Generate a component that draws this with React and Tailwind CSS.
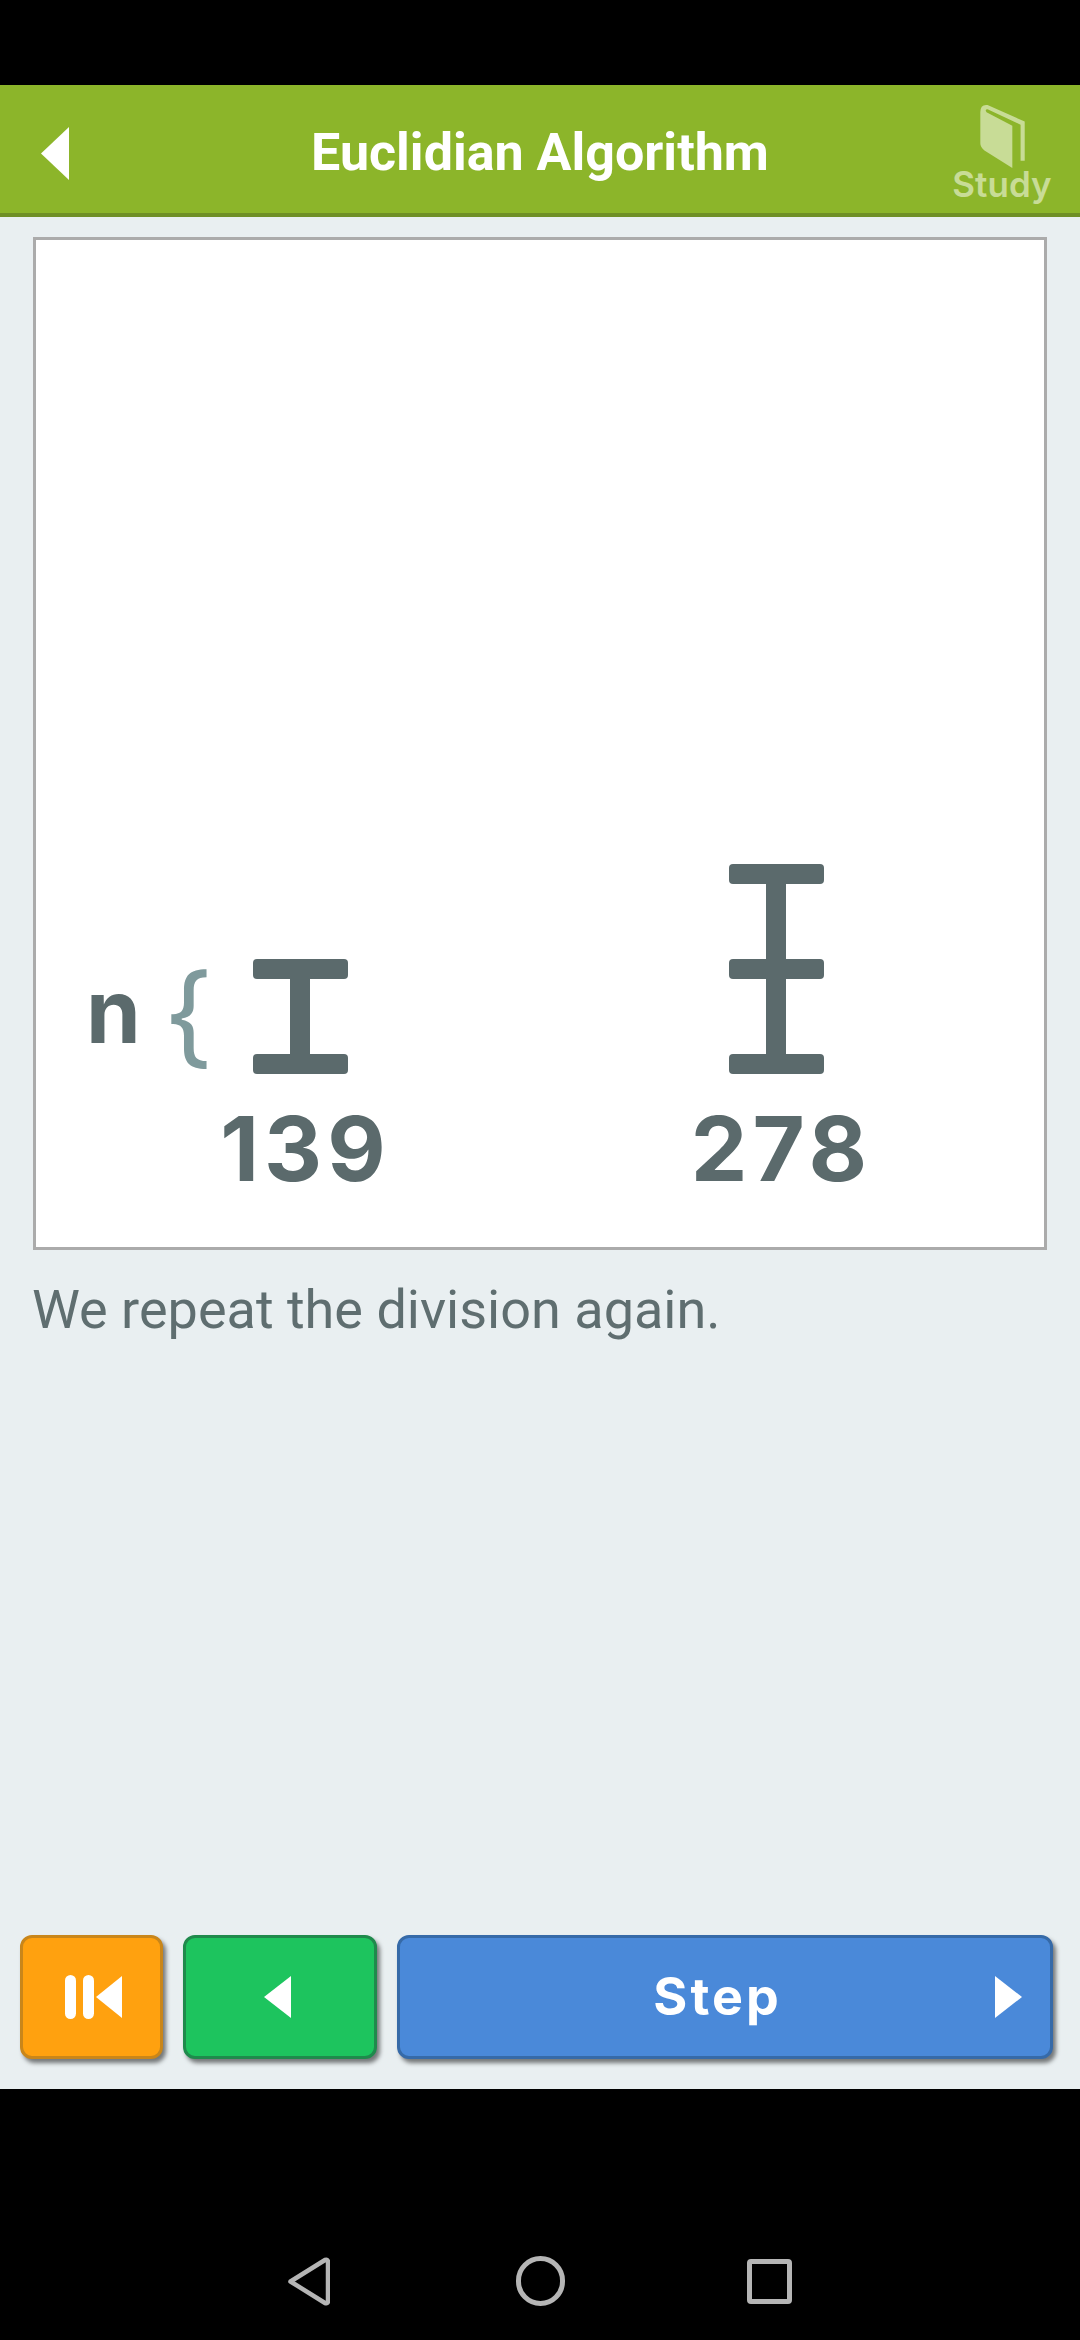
import React from "react";

function Bar() {
  return <div className="w-[95px] h-[20px] rounded-[4px] bg-[#5b6a6c]" />;
}
function Stem() {
  return <div className="w-[20px] h-[75px] bg-[#5b6a6c]" />;
}
function Beam({ units }) {
  const items = [];
  for (let i = 0; i < units; i++) {
    items.push(<Bar key={"b" + i} />);
    items.push(<Stem key={"s" + i} />);
  }
  items.push(<Bar key="last" />);
  return <div className="flex flex-col items-center">{items}</div>;
}

function Tri({ dir, w = 20, h = 42, className = "" }) {
  const pts = dir === "left" ? `${w},0 0,${h / 2} ${w},${h}` : `0,0 ${w},${h / 2} 0,${h}`;
  return (
    <svg width={w} height={h} viewBox={`0 0 ${w} ${h}`} className={className}>
      <polygon points={pts} fill="#fff" />
    </svg>
  );
}

export default function App() {
  return (
    <div className="w-[1080px] h-[2340px] flex flex-col bg-black font-['Roboto',sans-serif]">
      <div className="h-[85px] shrink-0 bg-black" />
      <header className="h-[132px] shrink-0 bg-[#8cb52a] border-b-[4px] border-[#6f8f26] flex items-center justify-between pl-[41px] pr-[30px]">
        <div className="w-[85px] mt-[9px]">
          <Tri dir="left" w={28} h={53} />
        </div>
        <h1 className="text-[52px] leading-none font-bold text-white mt-[8px]">Euclidian Algorithm</h1>
        <div className="flex flex-col items-center w-[96px] mt-[6px]">
          <svg width="46" height="64" viewBox="0 0 44 62">
            <path
              d="M1 8 Q1 0 8 1 L44 17 L44 55 L40 55 L40 20 L8 5 Q5 5 7 8 L32 21 L32 62 L5 45 Q1 42 1 38 Z"
              fill="#c8dc96"
            />
          </svg>
          <span className="text-[35px] leading-[33px] font-semibold text-[#c8dc96] font-['Inter',sans-serif]">Study</span>
        </div>
      </header>
      <main className="shrink-0 h-[1872px] bg-[#e9eff1] flex flex-col">
        <section className="mt-[20px] ml-[33px] w-[1014px] h-[1013px] bg-white border-[3px] border-[#ababab] flex items-end shrink-0">
          <div className="flex items-end pb-[53px]">
            <div className="flex items-end w-[114px] ml-[50px] mb-[139px] shrink-0">
              <span className="text-[88px] leading-none font-bold text-[#5b6a6c] font-['Inter',sans-serif]">n</span>
              <span className="text-[110px] leading-none font-normal text-[#7f9a9c] font-['Inter',sans-serif] ml-[22px] mb-[-14px] origin-left scale-x-[1.08]">{"{"}</span>
            </div>
            <div className="flex flex-col items-center w-[200px] shrink-0">
              <Beam units={1} />
              <div className="text-[90px] leading-none mt-[30px] ml-[11px] tracking-[5px] font-bold text-[#5b6a6c] font-['Inter',sans-serif]">139</div>
            </div>
            <div className="flex flex-col items-center w-[200px] ml-[276px] shrink-0">
              <Beam units={2} />
              <div className="text-[90px] leading-none mt-[30px] ml-[11px] tracking-[5px] font-bold text-[#5b6a6c] font-['Inter',sans-serif]">278</div>
            </div>
          </div>
        </section>
        <p className="ml-[32px] mt-[28px] text-[54px] leading-[64px] text-[#5f6e70]">We repeat the division again.</p>
        <div className="mt-auto mb-[30px] ml-[20px] flex gap-[20px]">
          <button className="w-[143px] h-[124px] rounded-[12px] bg-[#ffa10f] border-[3px] border-[#c9861a] shadow-[3px_4px_4px_rgba(0,0,0,0.5)] flex items-center justify-center">
            <div className="flex items-center ml-[4px]">
              <div className="w-[11px] h-[44px] rounded-full bg-white" />
              <div className="w-[11px] h-[44px] rounded-full bg-white ml-[7px]" />
              <Tri dir="left" w={26} h={42} className="ml-[2px]" />
            </div>
          </button>
          <button className="w-[194px] h-[124px] rounded-[12px] bg-[#1dc45e] border-[3px] border-[#1f8a4c] shadow-[3px_4px_4px_rgba(0,0,0,0.5)] flex items-center justify-center">
            <Tri dir="left" w={27} h={42} className="mr-[5px]" />
          </button>
          <button className="w-[656px] h-[124px] rounded-[12px] bg-[#4a89d9] border-[3px] border-[#366aa8] shadow-[3px_4px_4px_rgba(0,0,0,0.5)] flex items-center pl-[40px] pr-[28px]">
            <span className="flex-1 text-center text-[52px] leading-none font-bold text-white tracking-[3px] font-['Inter',sans-serif]">Step</span>
            <Tri dir="right" w={27} h={42} />
          </button>
        </div>
      </main>
      <nav className="flex-1 bg-black flex items-end justify-center">
        <div className="flex items-center mb-[34px]">
          <svg width="42" height="49" viewBox="0 0 42 49">
            <path d="M2.5 24.5 L37 3 Q40 2 40 5 V44 Q40 47 37 46 Z" fill="none" stroke="#b5b5b5" strokeWidth="4.5" strokeLinejoin="round" />
          </svg>
          <div className="w-[49px] h-[50px] ml-[186px] rounded-full border-[5px] border-[#b5b5b5]" />
          <div className="w-[45px] h-[45px] ml-[182px] rounded-[4px] border-[5px] border-[#b5b5b5]" />
        </div>
      </nav>
    </div>
  );
}
